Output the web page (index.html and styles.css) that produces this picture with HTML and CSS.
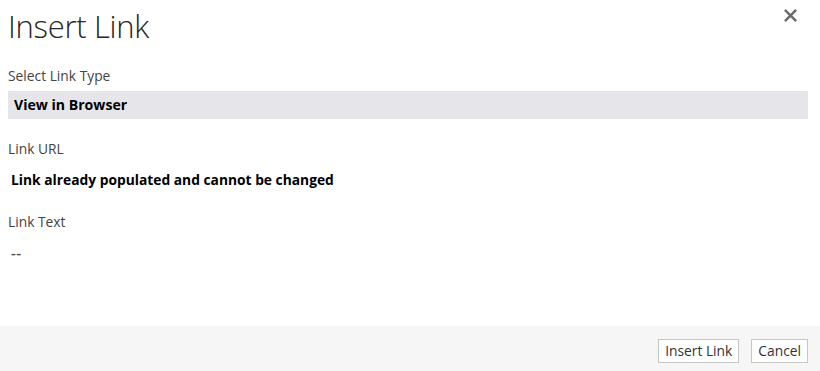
FILE: index.html
```html
<!DOCTYPE html>
<html lang="en">
<head>
<meta charset="utf-8">
<title>Insert Link</title>
<link rel="stylesheet" href="styles.css">
</head>
<body>
<div class="dialog">
  <div class="content">
    <div class="header">
      <h1 class="title">Insert Link</h1>
      <button class="close" aria-label="Close">
        <svg width="13" height="13" viewBox="0 0 13 13"><path d="M1.8 1.8 L11.2 11.2 M11.2 1.8 L1.8 11.2" stroke="#6b6b6b" stroke-width="2.5" stroke-linecap="square"/></svg>
      </button>
    </div>
    <div class="label first">Select Link Type</div>
    <div class="select">View in Browser</div>
    <div class="label">Link URL</div>
    <div class="value strong">Link already populated and cannot be changed</div>
    <div class="label text-label">Link Text</div>
    <div class="value muted">--</div>
  </div>
  <div class="footer">
    <button class="btn">Insert Link</button>
    <button class="btn">Cancel</button>
  </div>
</div>
</body>
</html>
```

FILE: styles.css
```css
* { box-sizing: border-box; }
html, body { margin: 0; padding: 0; background: #fff; }
body {
  font-family: "Open Sans", "Noto Sans", "Liberation Sans", sans-serif;
  color: #444;
  width: 820px;
  height: 371px;
  overflow: hidden;
}
.dialog {
  display: flex;
  flex-direction: column;
  height: 371px;
}
.content {
  flex: 1;
  padding: 0 12px 0 8px;
}
.header {
  display: flex;
  justify-content: space-between;
  align-items: flex-start;
  height: 62px;
}
.title {
  margin: 0;
  padding-top: 4px;
  font-size: 31px;
  font-weight: 300;
  line-height: 44px;
  color: #262626;
  letter-spacing: -0.3px;
}
.close {
  margin: 9px 11px 0 0;
  padding: 0;
  border: 0;
  background: none;
  width: 13px;
  height: 13px;
  display: flex;
}
.label {
  font-size: 13.8px;
  line-height: 19px;
  color: #444;
  margin-top: 20px;
}
.label.first { margin-top: 4px; }
.label.text-label { margin-top: 23px; }
.select {
  margin-top: 6px;
  height: 28px;
  background: #e6e6ea;
  padding-left: 6px;
  font-size: 14.1px;
  font-weight: 700;
  line-height: 28px;
  color: #000;
}
.value {
  padding-left: 3px;
  font-size: 13.8px;
  line-height: 19px;
  margin-top: 12px;
}
.value.muted {
  margin-top: 12px;
  color: #4a4a4a;
  font-size: 15px;
  font-weight: 600;
  letter-spacing: 0.5px;
}
.strong { font-weight: 700; color: #000; }
.footer {
  height: 45px;
  background: #f6f6f6;
  display: flex;
  justify-content: flex-end;
  align-items: flex-start;
  gap: 12px;
  padding: 13px 12px 0 0;
}
.btn {
  font-family: inherit;
  font-size: 13.8px;
  color: #333;
  background: #fff;
  border: 1px solid #c6c6c6;
  height: 24px;
  padding: 0 6px;
  line-height: 20px;
  margin: 0;
}
```
